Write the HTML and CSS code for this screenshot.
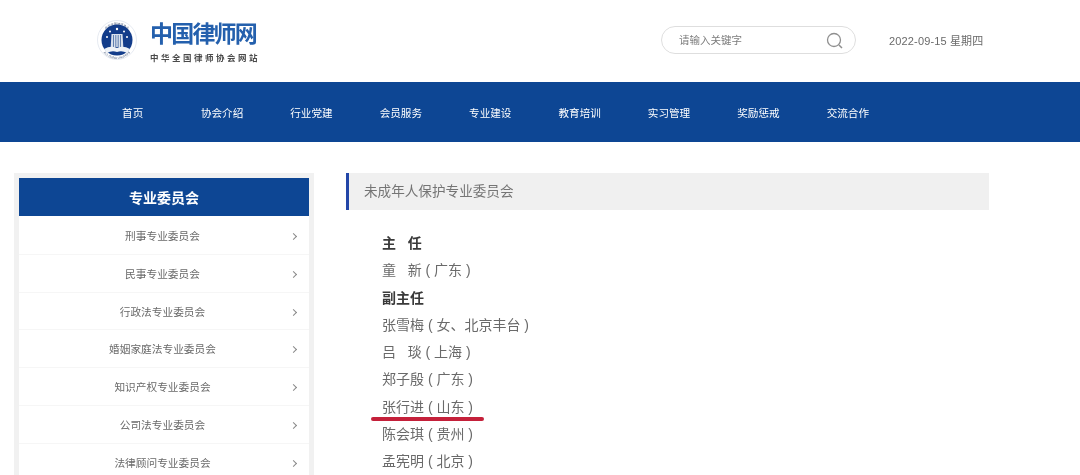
FILE: index.html
```html
<!DOCTYPE html>
<html lang="zh-CN">
<head>
    <meta charset="UTF-8">
    <meta name="viewport" content="width=device-width, initial-scale=1.0">
    <title>中国律师网</title>
    <link rel="stylesheet" href="styles.css">
</head>
<body>
    <header class="header">
        <a href="#" class="logo">
            <svg class="logo-emblem" viewBox="0 0 40 40" width="40" height="40">
                <defs>
                    <path id="ring-top" d="M5 20a15 15 0 0 1 30 0"/>
                    <path id="ring-bottom" d="M3 22a17 17 0 0 0 34 0"/>
                </defs>
                <circle cx="20" cy="20" r="19.500" fill="#fff" stroke="#d5dce8" stroke-width=".6"/>
                <text class="ring-text"><textPath href="#ring-top" startOffset="50%" text-anchor="middle">中华全国律师协会</textPath></text>
                <text class="ring-text"><textPath href="#ring-bottom" startOffset="50%" text-anchor="middle">ALL CHINA LAWYERS</textPath></text>
                <circle cx="20" cy="20" r="15.500" fill="#123c8a"/>
                <path d="M14.500 14h11l.8 13h-12.600z" fill="#d8e0ec"/>
                <path d="M16.500 15v12M18.800 15v12M21.200 15v12M23.500 15v12" stroke="#3f649f" stroke-width=".8"/>
                <path d="M7 29q7-4 13-1q6-3 13 1l-3 4q-5-3-10-1q-5-2-10 1z" fill="#eef2f7"/>
                <circle cx="10" cy="17" r="1" fill="#fff"/>
                <circle cx="13" cy="11.500" r="1" fill="#fff"/>
                <circle cx="20" cy="9" r="1.200" fill="#fff"/>
                <circle cx="27" cy="11.500" r="1" fill="#fff"/>
                <circle cx="30" cy="17" r="1" fill="#fff"/>
            </svg>
            <div class="logo-text">
                <div class="logo-name">中国律师网</div>
                <div class="logo-sub">中华全国律师协会网站</div>
            </div>
        </a>
        <div class="search">
            <span class="search-hint">请输入关键字</span>
            <svg class="search-icon" viewBox="0 0 18 18" width="18" height="18">
                <circle cx="8" cy="8" r="6.500" fill="none" stroke="#8f8f8f" stroke-width="1.300"/>
                <path d="M13 13l3 3" stroke="#8f8f8f" stroke-width="1.500"/>
            </svg>
        </div>
        <div class="date">2022-09-15 星期四</div>
    </header>

    <nav class="nav">
        <a href="#">首页</a>
        <a href="#">协会介绍</a>
        <a href="#">行业党建</a>
        <a href="#">会员服务</a>
        <a href="#">专业建设</a>
        <a href="#">教育培训</a>
        <a href="#">实习管理</a>
        <a href="#">奖励惩戒</a>
        <a href="#">交流合作</a>
    </nav>

    <div class="content">
        <aside class="sidebar">
            <div class="sidebar-title">专业委员会</div>
            <a href="#" class="side-item">刑事专业委员会</a>
            <a href="#" class="side-item">民事专业委员会</a>
            <a href="#" class="side-item">行政法专业委员会</a>
            <a href="#" class="side-item">婚姻家庭法专业委员会</a>
            <a href="#" class="side-item">知识产权专业委员会</a>
            <a href="#" class="side-item">公司法专业委员会</a>
            <a href="#" class="side-item">法律顾问专业委员会</a>
        </aside>

        <main class="main">
            <div class="main-title">未成年人保护专业委员会</div>
            <ul class="members">
                <li class="role">主&nbsp;&nbsp;&nbsp;任</li>
                <li>童&nbsp;&nbsp;&nbsp;新 ( 广东 )</li>
                <li class="role">副主任</li>
                <li>张雪梅 ( 女、北京丰台 )</li>
                <li>吕&nbsp;&nbsp;&nbsp;琰 ( 上海 )</li>
                <li>郑子殷 ( 广东 )</li>
                <li class="marked">张行进 ( 山东 )</li>
                <li>陈会琪 ( 贵州 )</li>
                <li>孟宪明 ( 北京 )</li>
            </ul>
        </main>
    </div>
</body>
</html>
```

FILE: styles.css
```css
:root {
    --brand-blue: #0d4694;
    --text-gray: #6a6a6a;
}

* {
    box-sizing: border-box;
}

html, body {
    height: 475px;
}

body {
    margin: 0;
    overflow: hidden;
    background-color: #fff;
    color: var(--text-gray);
    font-family: "Liberation Sans", "Noto Sans CJK SC", sans-serif;
    filter: blur(0.4px);
}

a {
    color: inherit;
    text-decoration: none;
}

.header {
    height: 82px;
    padding: 0 0 0 97px;
    display: flex;
    align-items: center;
}

.logo {
    width: 564px;
    display: flex;
    align-items: center;
    gap: 13px;
}

.logo-emblem {
    margin-top: -3px;
}

.ring-text {
    font-size: 3px;
    fill: #47597a;
}

.logo-name {
    font-size: 23px;
    line-height: 28px;
    width: 106px;
    font-weight: 700;
    letter-spacing: -1.800px;
    color: #2460ad;
    white-space: nowrap;
    font-family: "Noto Sans CJK SC", sans-serif;
}

.logo-sub {
    margin-top: 6px;
    font-size: 8.500px;
    line-height: 12px;
    font-weight: 700;
    letter-spacing: 2.500px;
    color: #4a4a4a;
    white-space: nowrap;
}

.search {
    width: 195px;
    height: 28px;
    margin-top: -3px;
    padding: 0 11px 0 17px;
    border: 1px solid #dedede;
    border-radius: 14px;
    display: flex;
    align-items: center;
    justify-content: space-between;
}

.search-hint {
    font-size: 10.500px;
    color: #7c7c7c;
}

.search-icon {
    margin-top: 2px;
}

.date {
    margin: -3px 0 0 33px;
    font-size: 11px;
    letter-spacing: 0.150px;
    white-space: nowrap;
}

.nav {
    height: 60px;
    padding-left: 88px;
    background-color: var(--brand-blue);
    display: flex;
    align-items: center;
}

.nav a {
    width: 89.400px;
    text-align: center;
    font-size: 10.600px;
    color: #fff;
}

.content {
    display: flex;
    align-items: flex-start;
    padding: 31px 0 0 14px;
}

.sidebar {
    width: 300px;
    flex-shrink: 0;
    border: 5px solid #f1f1f1;
}

.sidebar-title {
    height: 38px;
    margin-bottom: 1px;
    line-height: 40px;
    background-color: var(--brand-blue);
    color: #fff;
    text-align: center;
    font-size: 14px;
    font-weight: 700;
}

.side-item {
    position: relative;
    display: block;
    height: 37.800px;
    padding-right: 3px;
    line-height: 39px;
    text-align: center;
    font-size: 10.700px;
    border-bottom: 1px solid #f6f6f6;
}

/* 右侧箭头 */
.side-item::after {
    content: "";
    position: absolute;
    right: 13px;
    top: 17px;
    width: 4px;
    height: 4px;
    border-top: 1px solid #888;
    border-right: 1px solid #888;
    transform: rotate(45deg);
}

.main {
    width: 643px;
    margin-left: 32px;
}

.main-title {
    height: 37px;
    padding-left: 15px;
    line-height: 37px;
    background-color: #f0f0f0;
    border-left: 3px solid #2346a8;
    font-size: 13.600px;
    color: #757575;
}

.members {
    list-style: none;
    margin: 20px 0 0;
    padding: 0 0 0 36px;
    font-size: 14px;
    line-height: 27.300px;
}

.role {
    font-weight: 700;
    color: #3a3a3a;
}

.marked {
    position: relative;
}

/* 红色标注线 */
.marked::after {
    content: "";
    position: absolute;
    left: -11px;
    top: 23.500px;
    width: 113px;
    height: 3.500px;
    border-radius: 2px;
    background-color: #c4203a;
}
```
